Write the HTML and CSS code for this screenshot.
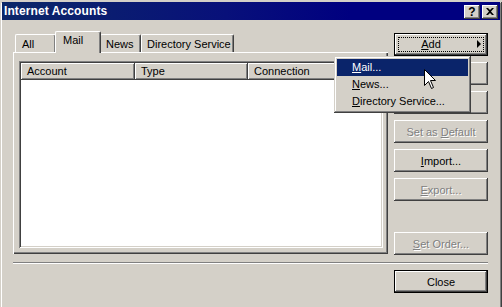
FILE: index.html
```html
<!DOCTYPE html>
<html lang="en">
<head>
    <meta charset="UTF-8">
    <title>Internet Accounts</title>
    <link rel="stylesheet" href="styles.css">
</head>
<body>

    <div class="window">
        <!-- Title bar -->
        <div class="titlebar">
            <span class="title">Internet Accounts</span>
            <div class="title-btns">
                <span class="tbtn help">?</span>
                <span class="tbtn">
                    <svg width="8" height="7" viewBox="0 0 8 7"><path d="M0 0h2l2 2 2-2h2L5 3.5 8 7H6L4 5 2 7H0l3-3.5z" fill="#000"/></svg>
                </span>
            </div>
        </div>

        <div class="content">
            <div class="main">
                <div class="tabs-area">
                    <div class="tabstrip">
                        <div class="tab tab-all">All</div>
                        <div class="tab tab-mail active">Mail</div>
                        <div class="tab tab-news">News</div>
                        <div class="tab tab-dir">Directory Service</div>
                    </div>
                    <div class="panel">
                        <div class="listview">
                            <div class="lv-header">
                                <div class="col col-account">Account</div>
                                <div class="col col-type">Type</div>
                                <div class="col col-conn">Connection</div>
                            </div>
                        </div>
                    </div>
                </div>

                <div class="buttons">
                    <button class="btn default focus"><span class="focus-rect"><u>A</u>dd</span><span class="arrow"></span></button>
                    <button class="btn"><u>R</u>emove</button>
                    <button class="btn"><u>P</u>roperties</button>
                    <button class="btn disabled">Set as <u>D</u>efault</button>
                    <button class="btn"><u>I</u>mport...</button>
                    <button class="btn disabled"><u>E</u>xport...</button>
                    <button class="btn disabled order"><u>S</u>et Order...</button>
                </div>
            </div>

            <div class="separator"></div>

            <div class="footer">
                <button class="btn default">Close</button>
            </div>
        </div>

        <!-- Add popup menu -->
        <div class="menu">
            <div class="menu-item selected"><u>M</u>ail...</div>
            <div class="menu-item"><u>N</u>ews...</div>
            <div class="menu-item"><u>D</u>irectory Service...</div>
        </div>

        <svg class="cursor" width="13" height="21" viewBox="0 0 13 21">
            <path d="M0.5 0.5 V16.5 L4.5 12.5 L7.5 19.5 L9.5 18.5 L6.5 11.5 H11.5 Z" fill="#fff" stroke="#000" stroke-width="1"/>
        </svg>
    </div>

</body>
</html>
```

FILE: styles.css
```css
* {
    margin: 0;
    padding: 0;
    box-sizing: border-box;
}

body {
    font-family: 'Liberation Sans', Arial, sans-serif;
    font-size: 11px;
    background-color: #d4d0c8;
    color: #000;
}

u {
    text-decoration: underline;
    text-underline-offset: 1px;
}

.window {
    position: relative;
    width: 502px;
    height: 307px;
    background-color: #d4d0c8;
    box-shadow: inset -1px -1px #404040, inset 1px 1px #d4d0c8,
                inset -2px -2px #808080, inset 2px 2px #fff;
}

/* Title bar */
.titlebar {
    display: flex;
    justify-content: space-between;
    align-items: center;
    margin: 2px 2px 0;
    height: 18px;
    padding: 0 2px 0 2px;
    background: linear-gradient(to right, #0c2868, #08107a 45%, #000080 70%);
}

.title {
    color: #fff;
    font-weight: bold;
    font-size: 12px;
    letter-spacing: 0.1px;
}

.title-btns {
    display: flex;
    gap: 2px;
    padding-top: 1px;
}

.tbtn {
    display: flex;
    justify-content: center;
    align-items: center;
    width: 16px;
    height: 14px;
    background-color: #d4d0c8;
    box-shadow: inset -1px -1px #404040, inset 1px 1px #fff, inset -2px -2px #808080;
    font-weight: bold;
    font-size: 12px;
    line-height: 14px;
}

.tbtn svg {
    margin-top: -1px;
}

/* Content */
.content {
    padding: 11px 14px 0 13px;
}

.main {
    display: flex;
}

.tabs-area {
    width: 375px;
}

.tabstrip {
    display: flex;
    align-items: flex-end;
    height: 21px;
    padding-left: 2px;
}

.tab {
    height: 18px;
    padding: 2px 0 0 6px;
    border-top: 1px solid #fff;
    border-left: 1px solid #fff;
    border-right: 1px solid #404040;
    border-radius: 2px 2px 0 0;
    box-shadow: inset -1px 0 #808080;
    line-height: 14px;
}

.tab-all  { width: 41px; }
.tab-mail { width: 44px; }
.tab-news { width: 41px; padding-left: 5px; }
.tab-dir  { width: 93px; padding-left: 5px; }

.tab.active {
    position: relative;
    z-index: 1;
    width: 46px;
    height: 22px;
    margin: 0 -1px -1px -1px;
    padding: 1px 0 0 7px;
    background-color: #d4d0c8;
}

.panel {
    width: 375px;
    height: 202px;
    padding: 9px 5px 6px 6px;
    box-shadow: inset 1px 1px #fff, inset -1px -1px #404040, inset -2px -2px #808080;
}

.listview {
    height: 187px;
    padding: 2px;
    background-color: #fff;
    box-shadow: inset 1px 1px #808080, inset -1px -1px #fff,
                inset 2px 2px #404040, inset -2px -2px #d4d0c8;
}

.lv-header {
    display: flex;
    height: 17px;
}

.col {
    height: 17px;
    padding-left: 6px;
    line-height: 16px;
    background-color: #d4d0c8;
    box-shadow: inset -1px -1px #404040, inset 1px 1px #fff, inset -2px -2px #808080;
}

.col-account { width: 114px; }
.col-type    { width: 113px; }
.col-conn    { flex: 1; }

/* Buttons */
.buttons {
    display: flex;
    flex-direction: column;
    gap: 6px;
    width: 94px;
    height: 222px;
    margin: 2px 0 0 6px;
}

.btn {
    position: relative;
    width: 94px;
    height: 23px;
    border: none;
    font-family: 'Liberation Sans', Arial, sans-serif;
    font-size: 11px;
    color: #000;
    background-color: #d4d0c8;
    box-shadow: inset -1px -1px #404040, inset 1px 1px #fff, inset -2px -2px #808080;
    text-align: center;
}

.btn.default {
    border: 1px solid #000;
    box-shadow: inset -1px -1px #404040, inset 1px 1px #fff, inset -2px -2px #808080;
}

.btn.disabled {
    color: #808080;
    text-shadow: 1px 1px 0 #fff;
}

.btn.order {
    margin-top: auto;
}

.focus-rect {
    position: absolute;
    top: 3px;
    left: 3px;
    right: 3px;
    bottom: 3px;
    border: 1px dotted #000;
    line-height: 13px;
    padding-right: 20px;
}

.arrow {
    position: absolute;
    top: 6px;
    right: 6px;
    width: 0;
    height: 0;
    border-top: 4px solid transparent;
    border-bottom: 4px solid transparent;
    border-left: 4px solid #000;
}

.separator {
    width: 475px;
    height: 2px;
    margin-top: 7px;
    border-top: 1px solid #808080;
    border-bottom: 1px solid #fff;
}

.footer {
    display: flex;
    justify-content: flex-end;
    margin-top: 6px;
}

/* Popup menu */
.menu {
    position: absolute;
    top: 54px;
    left: 334px;
    width: 137px;
    height: 57px;
    padding: 3px;
    background-color: #d4d0c8;
    box-shadow: inset -1px -1px #404040, inset 1px 1px #d4d0c8,
                inset -2px -2px #808080, inset 2px 2px #fff;
}

.menu-item {
    height: 17px;
    padding-left: 15px;
    line-height: 17px;
}

.menu-item.selected {
    background-color: #0a246a;
    color: #fff;
}

.cursor {
    position: absolute;
    top: 67px;
    left: 424px;
}
```
